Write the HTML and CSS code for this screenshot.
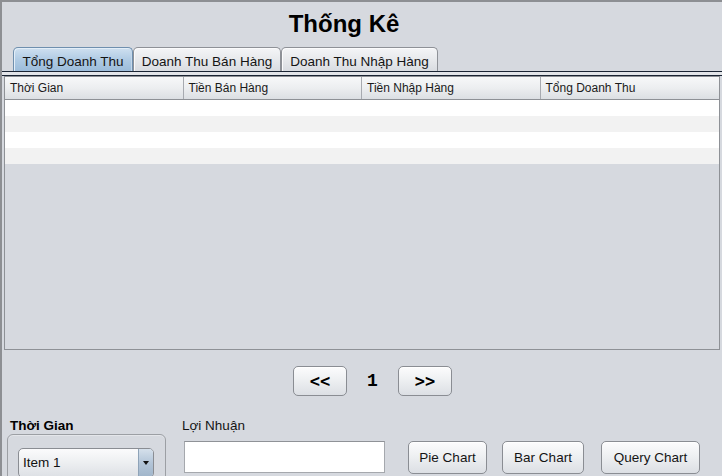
FILE: index.html
```html
<!DOCTYPE html>
<html lang="vi">
<head>
<meta charset="utf-8">
<title>Thống Kê</title>
<link rel="stylesheet" href="styles.css">
</head>
<body>
<div class="window">
  <h1 class="title">Thống Kê</h1>
  <div class="tabs">
    <div class="tab tab-active tab-1">Tổng Doanh Thu</div>
    <div class="tab tab-2">Doanh Thu Bán Hàng</div>
    <div class="tab tab-3">Doanh Thu Nhập Hàng</div>
  </div>
  <div class="tab-rule"></div>
  <div class="table-pane">
    <div class="table-head">
      <div class="th">Thời Gian</div>
      <div class="th">Tiền Bán Hàng</div>
      <div class="th">Tiền Nhập Hàng</div>
      <div class="th">Tổng Doanh Thu</div>
    </div>
    <div class="tr tr-even"></div>
    <div class="tr tr-odd"></div>
    <div class="tr tr-even"></div>
    <div class="tr tr-odd"></div>
  </div>
  <div class="pager">
    <button class="btn btn-page">&lt;&lt;</button>
    <span class="page-num">1</span>
    <button class="btn btn-page">&gt;&gt;</button>
  </div>
  <div class="controls">
    <div class="field field-time">
      <div class="label label-bold">Thời Gian</div>
      <div class="group">
        <div class="combo">
          <span class="combo-text">Item 1</span>
          <span class="combo-arrow">
            <svg width="6" height="4" viewBox="0 0 6 4"><path d="M0 0H6L3 4Z" fill="#111"/></svg>
          </span>
        </div>
      </div>
    </div>
    <div class="field field-profit">
      <div class="label">Lợi Nhuận</div>
      <div class="textfield"></div>
    </div>
    <div class="chart-buttons">
      <button class="btn btn-chart btn-pie">Pie Chart</button>
      <button class="btn btn-chart btn-bar">Bar Chart</button>
      <button class="btn btn-chart btn-query">Query Chart</button>
    </div>
  </div>
</div>
</body>
</html>
```

FILE: styles.css
```css
* { box-sizing: border-box; }

html, body {
  margin: 0;
  padding: 0;
  width: 722px;
  height: 476px;
  overflow: hidden;
  background: #d6d9df;
}

body {
  font-family: "Liberation Sans", Arial, sans-serif;
  font-size: 13.5px;
  color: #111;
}

.window {
  width: 722px;
  height: 476px;
  border-top: 2px solid #8d8f93;
  border-left: 2px solid #8d8f93;
  background: #d6d9df;
  overflow: hidden;
}

.title {
  margin: 0;
  padding: 8px 36px 9px 0;
  font-size: 24px;
  line-height: 28px;
  font-weight: bold;
  text-align: center;
  color: #000;
}

.tabs {
  display: flex;
  padding-left: 11px;
  height: 24px;
}

.tab {
  height: 24px;
  padding-top: 4px;
  line-height: 20px;
  text-align: center;
  white-space: nowrap;
  color: #141414;
  border: 1px solid #8e9197;
  border-bottom: none;
  border-radius: 5px 5px 0 0;
  background: linear-gradient(#f4f5f7, #e6e8eb 55%, #d9dce1);
  box-shadow: inset 1px 1px 0 #fbfbfc;
}

.tab-active {
  border-color: #6f8fae;
  background: linear-gradient(#cfe0f0, #b0cbe4 50%, #9cbcda);
  box-shadow: inset 1px 1px 0 #e3eef8, inset -1px 0 0 #c5d8ea;
}

.tab-1 { width: 120px; }
.tab-2 { width: 148px; }
.tab-3 { width: 157px; }

.tab-rule {
  height: 5px;
  border-top: 1px solid #1a2433;
  border-bottom: 1px solid #1a2433;
  background: #e3e5e9;
}

.table-pane {
  margin: 0 2px;
  height: 274px;
  border: 1px solid #8e9196;
  background: #d6d9df;
}

.table-head {
  display: grid;
  grid-template-columns: repeat(4, 1fr);
  height: 23px;
  border-bottom: 1px solid #8e9196;
  background: linear-gradient(#f7f8f9, #eceef0 50%, #dcdfe3);
}

.th {
  padding-left: 5px;
  font-size: 12px;
  line-height: 22px;
  color: #1a1a1a;
  border-right: 1px solid #a7aab0;
  white-space: nowrap;
}

.th:last-child { border-right: none; }

.tr { height: 16px; }
.tr-even { background: #ffffff; }
.tr-odd { background: #f2f2f2; }

.pager {
  display: flex;
  justify-content: center;
  align-items: center;
  gap: 20px;
  padding-left: 21px;
  margin-top: 16px;
  height: 30px;
}

.btn {
  font-family: "Liberation Sans", Arial, sans-serif;
  font-size: 13.5px;
  color: #141414;
  border: 1px solid #8a8d93;
  border-radius: 5px;
  background: linear-gradient(#fcfcfd, #eef0f2 45%, #dcdfe4);
  box-shadow: inset 0 1px 0 #ffffff;
  padding: 0;
  margin: 0;
}

.btn-page {
  width: 54px;
  height: 30px;
  font-family: "DejaVu Sans Mono", "Liberation Mono", monospace;
  font-weight: bold;
  font-size: 17px;
  color: #000;
}

.page-num {
  width: 11px;
  text-align: center;
  font-family: "Liberation Mono", "DejaVu Sans Mono", monospace;
  font-weight: bold;
  font-size: 18px;
  color: #000;
}

.controls {
  display: flex;
  margin-top: 21px;
  padding-left: 5px;
}

.label {
  height: 17px;
  line-height: 17px;
  white-space: nowrap;
  color: #141414;
}

.label-bold {
  font-weight: bold;
  padding-left: 3px;
  color: #000;
}

.field-time { width: 159px; }

.group {
  height: 60px;
  padding: 13px 0 0 10px;
  border: 1px solid #9c9fa4;
  border-radius: 6px;
  box-shadow: inset 0 1px 0 #e4e6ea;
}

.combo {
  display: flex;
  width: 136px;
  height: 30px;
  border: 1px solid #8a8d93;
  border-radius: 5px;
  background: linear-gradient(#fbfbfc, #eef0f2 45%, #dde0e5);
  overflow: hidden;
}

.combo-text {
  flex: 1;
  padding-left: 4px;
  line-height: 28px;
  color: #111;
}

.combo-arrow {
  width: 15px;
  display: flex;
  justify-content: center;
  align-items: center;
  border-left: 1px solid #8ea3b8;
  background: linear-gradient(#d5e0eb, #b3c5d8 50%, #a0b5ca);
}

.field-profit {
  margin-left: 16px;
}

.textfield {
  margin: 7px 0 0 2px;
  width: 201px;
  height: 32px;
  background: #fff;
  border: 1px solid #a5a8ad;
  border-top-color: #8f9297;
}

.chart-buttons {
  display: flex;
  padding-top: 24px;
  margin-left: 23px;
}

.btn-chart {
  height: 33px;
}

.btn-pie { width: 79px; }
.btn-bar { width: 82px; margin-left: 15px; }
.btn-query { width: 99px; margin-left: 17px; }
```
